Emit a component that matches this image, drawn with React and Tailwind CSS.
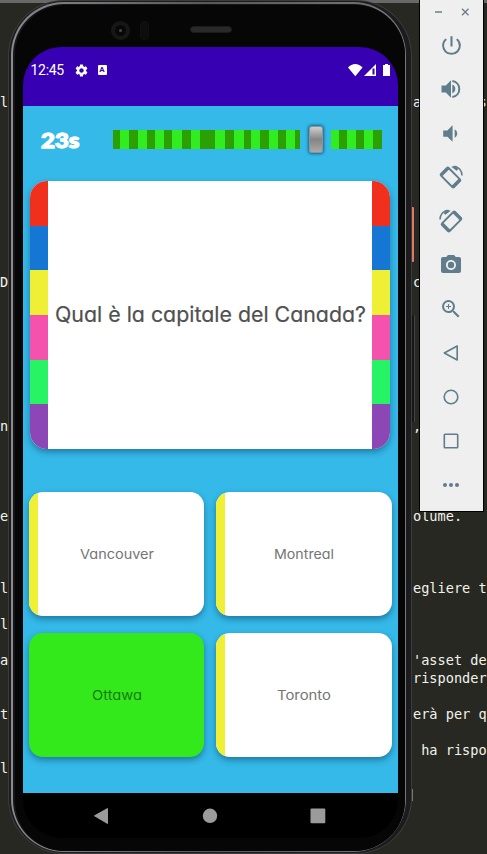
import React from 'react';
import {
  MdPowerSettingsNew,
  MdVolumeDown,
  MdCameraAlt,
  MdZoomIn,
  MdSettings,
} from 'react-icons/md';

// Lines of the editor behind the emulator: [left fragment, right fragment]
const editorLines = [
  ['', ''], ['', ''], ['', ''], ['', ''], ['', ''],
  ['l', 'a       s'],
  ['', ''], ['', ''], ['', ''], ['', ''], ['', ''], ['', ''], ['', ''], ['', ''], ['', ''],
  ['D', 'c'],
  ['', ''], ['', ''], ['', ''], ['', ''], ['', ''], ['', ''], ['', ''],
  ['n', ','],
  ['', ''], ['', ''], ['', ''], ['', ''],
  ['e', 'olume.'],
  ['', ''], ['', ''], ['', ''],
  ['l', 'egliere t'],
  ['', ''],
  ['l', ''],
  ['', ''],
  ['a', "'asset de"],
  ['', 'risponder'],
  ['', ''],
  ['t', 'erà per q'],
  ['', ''],
  ['', ' ha rispo'],
  ['l', ''],
];

// Widths of alternating dark / light segments of the timer
const elapsed = [7, 9.4, 9, 9, 8, 9, 8, 9.6, 9, 9, 15.4, 10, 8.6, 9.7, 7.7, 8.6, 8.7, 9, 8.6, 9, 4.7];
const remaining = [8.3, 8.7, 8.3, 8.7, 8.6, 8.7];

const cardStripes = [
  'bg-[#f0301d]',
  'bg-[#1576d4]',
  'bg-[#eff035]',
  'bg-[#f552ad]',
  'bg-[#27f464]',
  'bg-[#8d46b6]',
];

const answers = [
  { label: 'Vancouver', w: 74 },
  { label: 'Montreal', w: 60 },
  { label: 'Ottawa', w: 50, correct: true },
  { label: 'Toronto', w: 54 },
];

function Editor() {
  return (
    <div className="h-[854px] border-t-[3px] border-[#696969] bg-[#272822] font-['DejaVu_Sans_Mono','Liberation_Mono',monospace] text-[13.6px] leading-[18px] text-[#f2f2ec]">
      {editorLines.map(([left, right], i) => (
        <div key={i} className="flex h-[18px] justify-between whitespace-pre">
          <span className="w-[9px]">{left}</span>
          <span className="w-[74px]">{right}</span>
        </div>
      ))}
    </div>
  );
}

function StatusBar() {
  return (
    <div className="flex h-[59px] items-start justify-between bg-[#3700b3] pr-[7px] pl-[7.5px] pt-[15px] text-white">
      <div className="flex h-4 items-center">
        <span className="w-[34px] font-[Roboto,sans-serif] text-[14px] leading-4 tracking-[-0.3px]">12:45</span>
        <MdSettings className="ml-[9px] size-[15px]" />
        <span className="ml-[9px] flex h-[10px] w-[9px] items-center justify-center rounded-[1px] bg-white font-[Roboto,sans-serif] text-[8px] font-bold leading-none text-[#3700b3]">A</span>
      </div>
      <svg width="43" height="16" viewBox="0 0 43 16" fill="white">
        <path d="M0 4.600C4-.1 10.500-.1 14.500 4.600L7.300 13.500z" transform="translate(0 .8)" />
        <path d="M28 2v12H16z" />
        <path d="M24.500 6.500h2v6h-2z" fill="#3700b3" />
        <path d="M35 3h2V2h3v1h2v11h-7z" />
      </svg>
    </div>
  );
}

function Bar({ widths, darkFirst }) {
  return (
    <div className="flex h-[19px]">
      {widths.map((w, i) => (
        <div
          key={i}
          className={(i % 2 === 0) === darkFirst ? 'bg-[#2ba002]' : 'bg-[#31ec20]'}
          style={{ width: w }}
        />
      ))}
    </div>
  );
}

function Timer() {
  return (
    <div className="flex h-[75px] items-start pt-[20px]">
      <div className="flex h-[28px] w-[90px] items-center pl-[18px]">
        <svg width="42" height="28" className="overflow-visible">
          <text x="0" y="21.500" textLength="38.500" lengthAdjust="spacingAndGlyphs" fill="white" stroke="white" strokeWidth="1.300" className="font-[Lato,sans-serif] text-[21px] font-black">23s</text>
        </svg>
      </div>
      <div className="flex h-[27px] items-center">
        <Bar widths={elapsed} darkFirst />
        <div className="ml-[9px] mr-[8px] h-[27px] w-[13.600px] rounded-[3px] border border-[#8d9499] bg-linear-to-b from-[#cfcfcf] via-[#858585] to-[#a9a9a9] shadow-[0_0_3px_1px_rgba(0,30,50,0.55)]" />
        <Bar widths={remaining} darkFirst={false} />
      </div>
    </div>
  );
}

function Stripes() {
  return (
    <div className="flex w-[18px] flex-col">
      {cardStripes.map((c) => (
        <div key={c} className={`flex-1 ${c}`} />
      ))}
    </div>
  );
}

function Label({ children, width, size, className }) {
  return (
    <svg width={width} height={size * 1.5} className="overflow-visible">
      <text
        x="0"
        y={size * 1.08}
        textLength={width}
        lengthAdjust="spacingAndGlyphs"
        fontSize={size}
        className={`font-[Inter,sans-serif] [font-feature-settings:'cv11'_1] ${className}`}
      >
        {children}
      </text>
    </svg>
  );
}

function Quiz() {
  return (
    <div className="h-[687px] bg-[#34b9e8]">
      <Timer />
      <div className="ml-[7px] flex h-[268px] w-[360px] overflow-hidden rounded-[17px] bg-white shadow-[0_3px_6px_rgba(0,30,60,0.4)]">
        <Stripes />
        <div className="flex flex-1 items-center justify-center">
          <Label width={311} size={21} className="fill-[#505050] stroke-[#505050] stroke-[0.2px]">Qual è la capitale del Canada?</Label>
        </div>
        <Stripes />
      </div>
      <div className="mt-[43px] grid grid-cols-[175.500px_175.500px] gap-x-[12px] gap-y-[17px] pl-[5.500px]">
        {answers.map((a) => (
          <div
            key={a.label}
            className={`flex h-[124px] overflow-hidden rounded-[14px] shadow-[0_3px_6px_rgba(0,30,60,0.42)] ${a.correct ? 'bg-[#33e91c]' : 'bg-white'}`}
          >
            <div className={`w-[9px] ${a.correct ? '' : 'bg-[#eff035]'}`} />
            <div className="flex flex-1 items-center justify-center pt-px pr-[8px]">
              <Label width={a.w} size={13.2} className={a.correct ? 'fill-[#187b0e]' : 'fill-[#757575]'}>
                {a.label}
              </Label>
            </div>
          </div>
        ))}
      </div>
    </div>
  );
}

function NavBar() {
  return (
    <div className="h-[45px] bg-black">
      <svg width="375" height="45" fill="#9b9b9b">
        <path d="M71.500 22.800 84.500 15.500v15z" stroke="#9b9b9b" strokeLinejoin="round" />
        <circle cx="187" cy="22.800" r="7.200" />
        <rect x="287.500" y="15.500" width="14.800" height="14.800" rx="1" />
      </svg>
    </div>
  );
}

function Phone() {
  return (
    <div className="absolute left-[8px] top-0 h-[854px] w-[404px] rounded-[56px] bg-[#3c3c3d] p-[1px]">
      <div className="h-full rounded-[55px] bg-[#1c1c1e] pt-[1px] pr-[5px] pb-[1px] pl-[2px]">
        <div className="h-full rounded-[53px] bg-linear-to-r from-[#8a8a8e] via-[#58585b] to-[#77777a] pt-[2px] pr-[1.500px] pb-[1px] pl-[2px]">
          <div className="h-full rounded-[51px] bg-[#161518] pt-px pl-[2px]">
            <div className="h-full rounded-[50px] bg-[#070607] pt-[16px] pl-[8px]">
              <div className="flex h-[26px] items-start">
                <div className="ml-[88px] flex size-[19px] items-center justify-center rounded-full bg-[#171718]">
                  <div className="flex size-[11px] items-center justify-center rounded-full bg-[#080809]">
                    <div className="size-[3px] rounded-full bg-[#48484a]" />
                  </div>
                </div>
                <div className="ml-[10px] h-[19px] w-[9px] rounded-[4px] border border-[#111112] bg-[#0d0d0e]" />
                <div className="ml-[41px] mt-[5px] h-[7px] w-[42px] rounded-full border border-[#1b1b1c] bg-[#29292a]" />
              </div>
              <div className="w-[375px] overflow-hidden rounded-[38px]">
                <StatusBar />
                <Quiz />
                <NavBar />
              </div>
            </div>
          </div>
        </div>
      </div>
    </div>
  );
}

function SideButtons() {
  return (
    <>
      <div className="absolute left-[411px] top-[207px] h-[55px] w-[3px] rounded-[1px] bg-[#e07961]" />
      <div className="absolute left-[411px] top-[315px] h-[107px] w-[4px] rounded-[1px] border-r border-[#444] bg-[#171717]" />
      <div className="absolute left-[412px] top-[789px] h-[12px] w-px bg-[#77776f]" />
    </>
  );
}

function RotatePhone({ flip }) {
  return (
    <svg width="26" height="26" viewBox="0 0 26 26" fill="none" stroke="currentColor">
      <g transform={flip ? 'translate(26 0) scale(-1 1)' : undefined}>
        <g transform="rotate(-45 12.500 13.500)">
          <rect x="7.100" y="4.300" width="10.800" height="18.400" rx="1.200" strokeWidth="1.900" />
          <path d="M7.500 5.400h10M7.500 21.500h10" strokeWidth="2.800" />
        </g>
        <path d="M15.500 2.600C20.500 2.200 24 6.500 24 11.500" strokeWidth="1.500" />
        <path d="M13.200 2.700 18 1.700l2.300 3.600-1.700 1.500z" fill="currentColor" stroke="none" />
      </g>
    </svg>
  );
}

function VolumeUp() {
  return (
    <svg width="22" height="22" viewBox="0 0 22 22" fill="currentColor">
      <path d="M1.500 7.500h4.300L11 2.300v17.400l-5.200-5.200H1.500z" />
      <path d="M12.300 6.600c4 1.400 4 7.400 0 8.800z" />
      <path d="M12.300 3c9.300 1.300 9.300 14.700 0 16" fill="none" stroke="currentColor" strokeWidth="2" />
    </svg>
  );
}

function Outline({ children }) {
  return (
    <svg width="18" height="18" viewBox="0 0 18 18" fill="none" stroke="currentColor" strokeWidth="1.600">
      {children}
    </svg>
  );
}

function Toolbar() {
  const items = [
    <MdPowerSettingsNew className="size-[25px]" />,
    <VolumeUp />,
    <MdVolumeDown className="size-[25px]" />,
    <RotatePhone />,
    <RotatePhone flip />,
    <MdCameraAlt className="size-[24px]" />,
    <MdZoomIn className="size-[24px]" />,
    <Outline><path d="M2.300 9 15.200 2v14z" strokeLinejoin="round" /></Outline>,
    <Outline><circle cx="9" cy="9" r="6.800" /></Outline>,
    <Outline><rect x="2.300" y="2.300" width="13.400" height="13.400" rx=".7" /></Outline>,
    <svg width="18" height="6" fill="currentColor">
      <circle cx="3" cy="3" r="2" />
      <circle cx="9" cy="3" r="2" />
      <circle cx="15" cy="3" r="2" />
    </svg>,
  ];
  return (
    <div className="absolute left-[419px] top-0 h-[512px] w-[65px] border-x border-b border-black bg-[#efefef] text-[#607d8b]">
      <div className="flex h-[23px] items-center pt-px pl-[14.500px]">
        <svg width="38" height="10" fill="none" stroke="#6f7f88" strokeWidth="1.400">
          <path d="M0 5h7M27 1.800l6.500 6.500M33.500 1.800 27 8.300" />
        </svg>
      </div>
      {items.map((icon, i) => (
        <div key={i} className={`flex h-[44px] items-center justify-center ${i === 2 ? 'pr-[3px]' : 'pr-px'}`}>{icon}</div>
      ))}
    </div>
  );
}

export default function App() {
  return (
    <div className="relative h-[854px] w-[487px] overflow-hidden">
      <Editor />
      <SideButtons />
      <Phone />
      <Toolbar />
    </div>
  );
}
